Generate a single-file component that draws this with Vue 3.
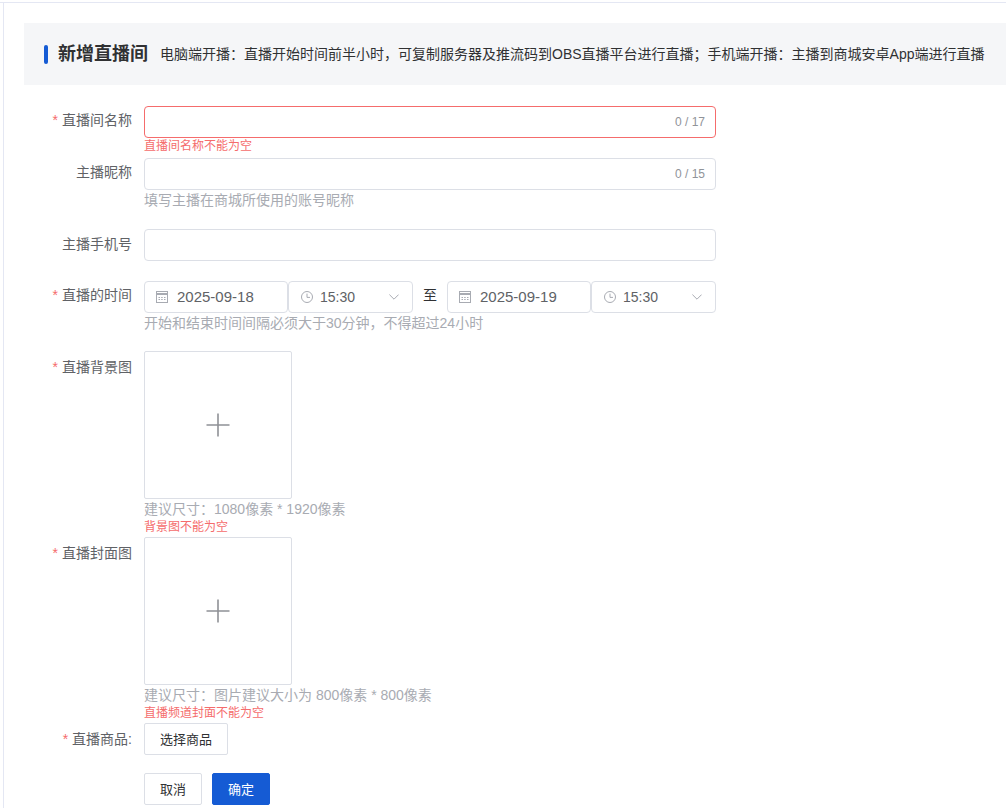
<script setup>
const rowsTimes = [
  { date: '2025-09-18', time: '15:30' },
  { date: '2025-09-19', time: '15:30' },
]
</script>

<template>
  <div class="page">
    <div class="card">
      <header class="head">
        <span class="bar"></span>
        <h1 class="title">新增直播间</h1>
        <p class="desc">电脑端开播：直播开始时间前半小时，可复制服务器及推流码到OBS直播平台进行直播；手机端开播：主播到商城安卓App端进行直播</p>
      </header>

      <form class="form" @submit.prevent>
        <div class="row gap-4">
          <label class="label tight"><i>*</i>直播间名称</label>
          <div class="field">
            <div class="input is-error"><span class="count">0 / 17</span></div>
            <div class="error">直播间名称不能为空</div>
          </div>
        </div>

        <div class="row gap-19">
          <label class="label tight">主播昵称</label>
          <div class="field">
            <div class="input"><span class="count">0 / 15</span></div>
            <div class="hint">填写主播在商城所使用的账号昵称</div>
          </div>
        </div>

        <div class="row gap-20">
          <label class="label mid">主播手机号</label>
          <div class="field">
            <div class="input"></div>
          </div>
        </div>

        <div class="row gap-18">
          <label class="label tight"><i>*</i>直播的时间</label>
          <div class="field">
            <div class="times">
              <template v-for="(t, i) in rowsTimes" :key="i">
                <span v-if="i === 1" class="to">至</span>
                <div class="date">
                  <svg class="ico" viewBox="0 0 12 12" width="12" height="12" fill="none" stroke="#a8abb2" stroke-width="1">
                    <rect x="0.5" y="0.5" width="11" height="11" />
                    <path d="M0.5 2.5h11M0.5 3.5h11M2.5 6.5h1.5M5.2 6.5h1.5M8 6.5h1.5M2.5 8.5h1.5M5.2 8.5h1.5M8 8.5h1.5" />
                  </svg>
                  <span class="date-text">{{ t.date }}</span>
                </div>
                <div class="time">
                  <svg class="ico" viewBox="0 0 12 12" width="12" height="12" fill="none" stroke="#a8abb2" stroke-width="1">
                    <circle cx="6" cy="6" r="5.5" />
                    <path d="M6 2.6V6.4H9" />
                  </svg>
                  <span>{{ t.time }}</span>
                  <svg class="chev" viewBox="0 0 10 6" width="10" height="6" fill="none" stroke="#a8abb2" stroke-width="1">
                    <path d="M0.4 0.6L5 5.2L9.6 0.6" />
                  </svg>
                </div>
              </template>
            </div>
            <div class="hint">开始和结束时间间隔必须大于30分钟，不得超过24小时</div>
          </div>
        </div>

        <div class="row gap-2">
          <label class="label"><i>*</i>直播背景图</label>
          <div class="field">
            <div class="upload">
              <svg viewBox="0 0 24 24" width="24" height="24" stroke="#8f9196" stroke-width="1.6">
                <path d="M12 0.5V23.5M0.5 12H23.5" />
              </svg>
            </div>
            <div class="hint">建议尺寸：1080像素 * 1920像素</div>
            <div class="error">背景图不能为空</div>
          </div>
        </div>

        <div class="row gap-2">
          <label class="label"><i>*</i>直播封面图</label>
          <div class="field">
            <div class="upload">
              <svg viewBox="0 0 24 24" width="24" height="24" stroke="#8f9196" stroke-width="1.6">
                <path d="M12 0.5V23.5M0.5 12H23.5" />
              </svg>
            </div>
            <div class="hint">建议尺寸：图片建议大小为 800像素 * 800像素</div>
            <div class="error">直播频道封面不能为空</div>
          </div>
        </div>

        <div class="row gap-18">
          <label class="label"><i>*</i>直播商品:</label>
          <div class="field">
            <button type="button" class="btn pick">选择商品</button>
          </div>
        </div>

        <div class="row">
          <span class="label"></span>
          <div class="actions">
            <button type="button" class="btn act">取消</button>
            <button type="button" class="btn act primary">确定</button>
          </div>
        </div>
      </form>
    </div>
  </div>
</template>

<style>
html, body { margin: 0; background: #fff; }
</style>

<style scoped>
.page {
  width: 1006px;
  height: 808px;
  overflow: hidden;
  box-sizing: border-box;
  padding-top: 2px;
  background: #fff;
  font-family: "Liberation Sans", "Noto Sans CJK SC", sans-serif;
  font-size: 14px;
  color: #606266;
}
.card {
  box-sizing: border-box;
  height: 100%;
  border-top: 1px solid #e4e7f3;
  padding-top: 20px;
  position: relative;
  background: #fff;
}
.card::before {
  content: "";
  position: absolute;
  left: 3px;
  top: 0;
  bottom: 0;
  width: 1px;
  background: #e4e7f3;
}
.head {
  height: 62px;
  display: flex;
  align-items: center;
  background: #f5f6f8;
  margin: 0 0 21px 24px;
  padding-left: 20px;
}
.bar {
  width: 4px;
  height: 19px;
  border-radius: 2px;
  background: #155bd4;
  margin-right: 10px;
}
.title {
  margin: 0 12px 0 0;
  font-size: 18px;
  font-weight: 700;
  line-height: 24px;
  color: #303133;
}
.desc {
  margin: 0;
  font-size: 14px;
  line-height: 20px;
  color: #303133;
  white-space: nowrap;
}
.row { display: flex; }
.gap-2 { margin-bottom: 2px; }
.gap-4 { margin-bottom: 4px; }
.gap-18 { margin-bottom: 18px; }
.gap-19 { margin-bottom: 19px; }
.gap-20 { margin-bottom: 20px; }
.label {
  flex: none;
  box-sizing: border-box;
  width: 144px;
  padding-right: 12px;
  text-align: right;
  line-height: 32px;
  color: #606266;
}
.label.tight { line-height: 28px; }
.label.mid { line-height: 30px; }
.label i {
  font-style: normal;
  color: #f56c6c;
  margin-right: 4px;
}
.field { width: 572px; }
.input {
  box-sizing: border-box;
  height: 32px;
  border: 1px solid #dcdfe6;
  border-radius: 4px;
  display: flex;
  align-items: center;
  justify-content: flex-end;
  padding-right: 10px;
}
.input.is-error { border-color: #f56c6c; }
.count { font-size: 12px; color: #909399; }
.error {
  font-size: 12px;
  line-height: 16px;
  color: #f56c6c;
}
.hint {
  font-size: 14px;
  line-height: 20px;
  color: #a8abb2;
}
.times { display: flex; align-items: center; }
.date, .time {
  box-sizing: border-box;
  height: 32px;
  border: 1px solid #dcdfe6;
  border-radius: 4px;
  display: flex;
  align-items: center;
}
.date {
  width: 144px;
  padding-left: 11px;
  gap: 9px;
  font-size: 15px;
}
.date-text { padding-bottom: 1px; }
.time {
  width: 125px;
  padding-left: 12px;
  gap: 7px;
  font-size: 14px;
}
.ico { flex: none; }
.chev { margin-left: auto; margin-right: 13px; }
.to {
  width: 34px;
  text-align: center;
  color: #303133;
  line-height: 28px;
  align-self: flex-start;
}
.upload {
  box-sizing: border-box;
  width: 148px;
  height: 148px;
  border: 1px solid #dcdfe6;
  border-radius: 2px;
  display: flex;
  align-items: center;
  justify-content: center;
}
.btn {
  box-sizing: border-box;
  height: 32px;
  border: 1px solid #dcdfe6;
  border-radius: 2px;
  background: #fff;
  color: #303133;
  font: inherit;
  font-size: 13px;
  padding: 0 0 2px;
}
.pick { width: 84px; }
.act { width: 58px; }
.actions { display: flex; gap: 10px; }
.primary {
  background: #155bd4;
  border-color: #155bd4;
  color: #fff;
}
</style>
